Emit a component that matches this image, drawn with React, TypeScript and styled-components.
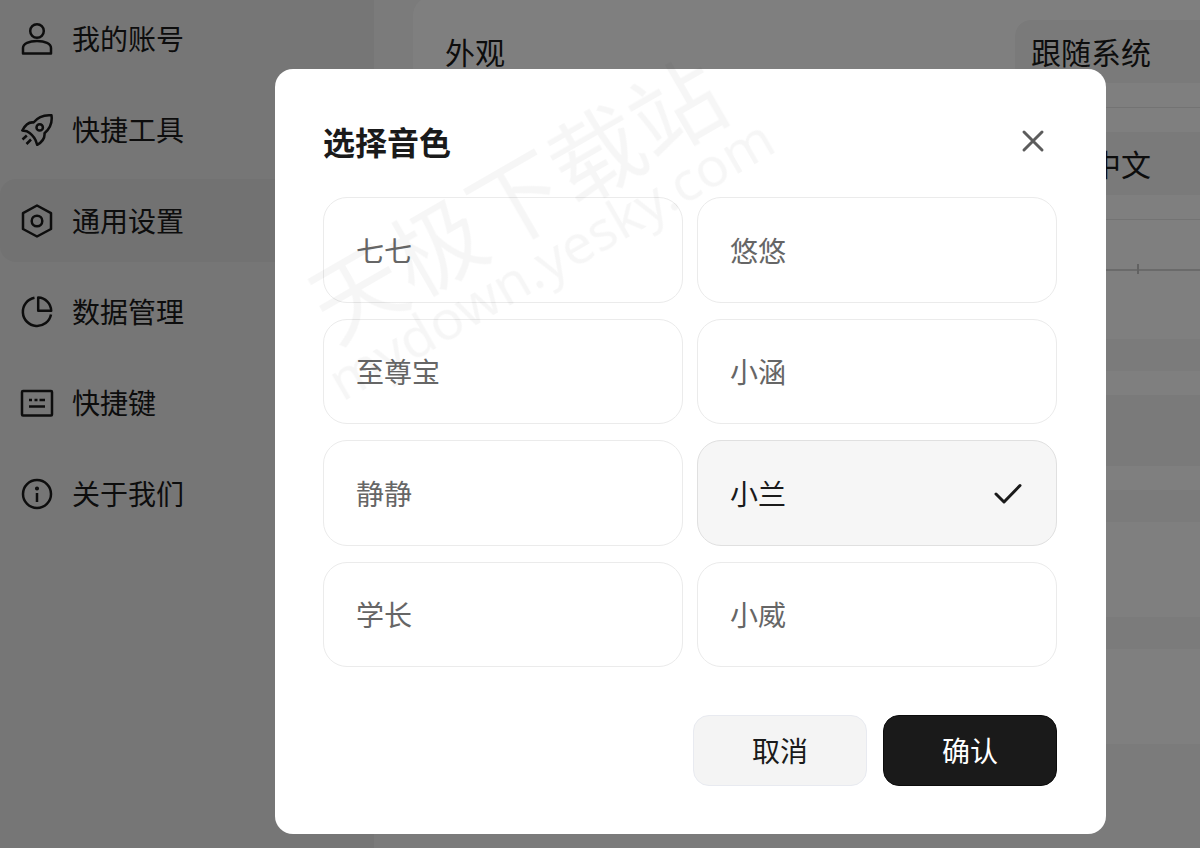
import React, { useState } from "react";
import styled, { createGlobalStyle } from "styled-components";

const GlobalStyle = createGlobalStyle`
  *, *::before, *::after { box-sizing: border-box; }
  body {
    margin: 0;
    overflow: hidden;
    background: #f6f6f6;
    color: #1a1a1a;
    font-family: "Noto Sans CJK SC", sans-serif;
  }
  button, input, select { font: inherit; color: inherit; }
`;

const Page = styled.div`
  display: flex;
  height: 100vh;
  overflow: hidden;
`;

const Sidebar = styled.nav`
  flex: none;
  width: 374px;
  background: #ececec;
`;

const NavList = styled.ul`
  display: flex;
  flex-direction: column;
  gap: 8px;
  margin: -3px 0 0;
  padding: 0;
  list-style: none;
`;

const NavLink = styled.a<{ $active?: boolean }>`
  display: flex;
  align-items: center;
  gap: 18px;
  height: 83px;
  padding: 0 20px;
  border-radius: 16px;
  background: ${(p) => (p.$active ? "#e4e4e4" : "transparent")};
  color: #1a1a1a;
  font-size: 28px;
  line-height: 40px;
  text-decoration: none;
`;

const NavLabel = styled.span`
  padding-bottom: 2px;
`;

const NavIcon = styled.svg`
  flex: none;
  width: 34px;
  height: 34px;
  fill: none;
  stroke: currentColor;
  stroke-width: 2.5;
  stroke-linejoin: round;
`;

const Content = styled.main`
  flex: 1;
  display: flex;
  flex-direction: column;
  gap: 32px;
  margin-top: -4px;
  padding-left: 39px;
`;

const Card = styled.section<{ $height?: number }>`
  flex: none;
  min-height: ${(p) => p.$height ?? 0}px;
  padding-left: 32px;
  border-radius: 20px 0 0 20px;
  background: #fff;
`;

const SettingRow = styled.div`
  display: flex;
  align-items: center;
  justify-content: space-between;
  height: 112px;
  border-bottom: 1px solid #e6e6e6;
  font-size: 30px;
  line-height: 40px;
`;

const SettingLabel = styled.label`
  padding-bottom: 2px;
`;

const Select = styled.select`
  appearance: none;
  width: 185px;
  height: 63px;
  margin-left: auto;
  padding: 0 16px 2px;
  border: 0;
  border-radius: 16px 0 0 16px;
  background: #f4f4f4;
  line-height: 40px;
`;

const SliderRow = styled.div`
  position: relative;
  display: flex;
  align-items: center;
  height: 119px;
  padding-bottom: 20px;
`;

const Slider = styled.input`
  appearance: none;
  width: 100%;
  height: 2px;
  margin: 0;
  background: #d4d4d4;
  &::-webkit-slider-thumb {
    appearance: none;
    width: 24px;
    height: 24px;
    border-radius: 50%;
    background: #1a1a1a;
  }
`;

const Tick = styled.span`
  position: absolute;
  right: 61px;
  top: 44px;
  width: 2px;
  height: 10px;
  background: #c4c4c4;
`;

const Field = styled.div`
  height: 119px;
  padding: 24px 0;
`;

const FieldBox = styled.div`
  height: 71px;
  background: #f4f4f4;
`;

const Scrim = styled.div`
  position: fixed;
  inset: 0;
  display: flex;
  align-items: flex-start;
  justify-content: center;
  padding: 69px 94px 14px 275px;
  background: rgba(0, 0, 0, 0.5);
`;

const Dialog = styled.form`
  flex: 1;
  max-width: 960px;
  padding: 48px 49px 48px 48px;
  border-radius: 18px;
  background: #fff;
`;

const DialogHeader = styled.header`
  display: flex;
  align-items: center;
  justify-content: space-between;
  height: 48px;
  margin-bottom: 32px;
`;

const Title = styled.h2`
  margin: 0;
  font-size: 32px;
  font-weight: 700;
  line-height: 48px;
`;

const CloseButton = styled.button`
  display: flex;
  align-items: center;
  justify-content: center;
  width: 48px;
  height: 48px;
  padding: 0;
  border: 0;
  background: none;
  color: #5c5c5c;
`;

const Options = styled.div`
  display: grid;
  grid-template-columns: 1fr 1fr;
  grid-auto-rows: 1fr;
  gap: 16px 14px;
  height: 470px;
`;

const Option = styled.label<{ $selected: boolean }>`
  display: flex;
  align-items: center;
  justify-content: space-between;
  padding: 0 32px;
  border: 1px solid ${(p) => (p.$selected ? "#e0e0e0" : "#ebebeb")};
  border-radius: 24px;
  background: ${(p) => (p.$selected ? "#f6f6f6" : "#fff")};
  color: ${(p) => (p.$selected ? "#1a1a1a" : "#666")};
  font-size: 28px;
  line-height: 40px;
  cursor: pointer;
`;

const Radio = styled.input`
  position: absolute;
  opacity: 0;
  pointer-events: none;
`;

const Actions = styled.footer`
  display: flex;
  justify-content: flex-end;
  gap: 16px;
  margin-top: 48px;
`;

const ActionButton = styled.button<{ $primary?: boolean }>`
  width: 174px;
  height: 71px;
  padding: 0 0 2px;
  border: 1px solid ${(p) => (p.$primary ? "#0c0c0c" : "#e8eaf0")};
  border-radius: 16px;
  background: ${(p) => (p.$primary ? "#1a1a1a" : "#f4f4f4")};
  color: ${(p) => (p.$primary ? "#fff" : "#1a1a1a")};
  font-size: 28px;
  line-height: 40px;
`;

const Watermark = styled.div`
  position: fixed;
  left: 528px;
  top: 220px;
  display: flex;
  flex-direction: column;
  align-items: center;
  transform: translate(-50%, -50%) rotate(-30deg);
  color: rgba(0, 0, 0, 0.035);
  white-space: nowrap;
  pointer-events: none;
`;

const WatermarkName = styled.span`
  font-size: 92px;
  line-height: 88px;
`;

const WatermarkSite = styled.span`
  font-family: "Noto Sans", sans-serif;
  font-size: 55px;
  line-height: 56px;
`;

const navItems = [
  {
    label: "我的账号",
    icon: (
      <>
        <circle cx="17" cy="9" r="6.8" />
        <path d="M3 31.500V26C3 21.500 9 19 17 19S31 21.500 31 26V31.500Z" />
      </>
    ),
  },
  {
    label: "快捷工具",
    icon: (
      <>
        <path d="M31.500 2.300C24 1.600 17.500 4.500 13.500 9.500C9 8.700 5.500 11.500 2.300 17.500L7 18.300C10.500 20.200 13.800 23.500 15.500 27L17.200 31.800C22.500 28.800 25 25 24.500 20.200C29.500 16 32.500 9.500 31.500 2.300Z" />
        <circle cx="19.700" cy="14.400" r="3.200" />
        <path d="M6.800 22.500L2.500 26.500M11 26.500L6.500 31" />
      </>
    ),
  },
  {
    label: "通用设置",
    icon: (
      <>
        <path d="M17 1.500L31 9.200V25L17 32.500L3 25V9.200Z" />
        <circle cx="17" cy="17" r="5.300" />
      </>
    ),
  },
  {
    label: "数据管理",
    icon: (
      <>
        <path d="M14.500 2.800A14.200 14.200 0 1 0 31 19.500" />
        <path d="M18.200 2.500V15.800H31.200C31 8.500 25.500 2.800 18.200 2.500Z" />
      </>
    ),
  },
  {
    label: "快捷键",
    icon: (
      <>
        <rect x="2" y="5" width="30" height="24.500" rx="1" />
        <path d="M9 14H12M14.500 14H17.500M19.500 14H25M9 20.500H25" />
      </>
    ),
  },
  {
    label: "关于我们",
    icon: (
      <>
        <circle cx="17" cy="17" r="14" />
        <circle cx="17" cy="11.500" r="0.800" fill="currentColor" />
        <path d="M17 16V25" />
      </>
    ),
  },
];

const voices = ["七七", "悠悠", "至尊宝", "小涵", "静静", "小兰", "学长", "小威"];

export default function App() {
  const [voice, setVoice] = useState("小兰");

  return (
    <>
      <GlobalStyle />
      <Page>
        <Sidebar>
          <NavList>
            {navItems.map((item) => (
              <li key={item.label}>
                <NavLink href="#" $active={item.label === "通用设置"}>
                  <NavIcon viewBox="0 0 34 34" aria-hidden="true">
                    {item.icon}
                  </NavIcon>
                  <NavLabel>{item.label}</NavLabel>
                </NavLink>
              </li>
            ))}
          </NavList>
        </Sidebar>
        <Content>
          <Card>
            <SettingRow>
              <SettingLabel htmlFor="appearance">外观</SettingLabel>
              <Select id="appearance">
                <option>跟随系统</option>
              </Select>
            </SettingRow>
            <SettingRow>
              <Select aria-label="语言">
                <option>简体中文</option>
              </Select>
            </SettingRow>
            <SliderRow>
              <Slider type="range" defaultValue={40} aria-label="字号" />
              <Tick />
            </SliderRow>
          </Card>
          <Card>
            <Field>
              <FieldBox />
            </Field>
          </Card>
          <Card $height={95} />
          <Card $height={95} />
        </Content>
      </Page>
      <Scrim>
        <Dialog role="dialog" aria-labelledby="voice-title" onSubmit={(e) => e.preventDefault()}>
          <DialogHeader>
            <Title id="voice-title">选择音色</Title>
            <CloseButton type="button" aria-label="关闭">
              <svg width="24" height="24" viewBox="0 0 24 24" stroke="currentColor" strokeWidth="3" strokeLinecap="round">
                <path d="M3 3L21 21M21 3L3 21" />
              </svg>
            </CloseButton>
          </DialogHeader>
          <Options role="radiogroup" aria-labelledby="voice-title">
            {voices.map((name) => (
              <Option key={name} $selected={name === voice}>
                <Radio type="radio" name="voice" checked={name === voice} onChange={() => setVoice(name)} />
                {name}
                {name === voice && (
                  <svg width="32" height="32" viewBox="0 0 32 32" fill="none" stroke="currentColor" strokeWidth="3" strokeLinecap="round" strokeLinejoin="round" aria-hidden="true">
                    <path d="M4 17L12 25L28 8.500" />
                  </svg>
                )}
              </Option>
            ))}
          </Options>
          <Actions>
            <ActionButton type="button">取消</ActionButton>
            <ActionButton type="submit" $primary>
              确认
            </ActionButton>
          </Actions>
        </Dialog>
      </Scrim>
      <Watermark aria-hidden="true">
        <WatermarkName>天极下载站</WatermarkName>
        <WatermarkSite>mydown.yesky.com</WatermarkSite>
      </Watermark>
    </>
  );
}
